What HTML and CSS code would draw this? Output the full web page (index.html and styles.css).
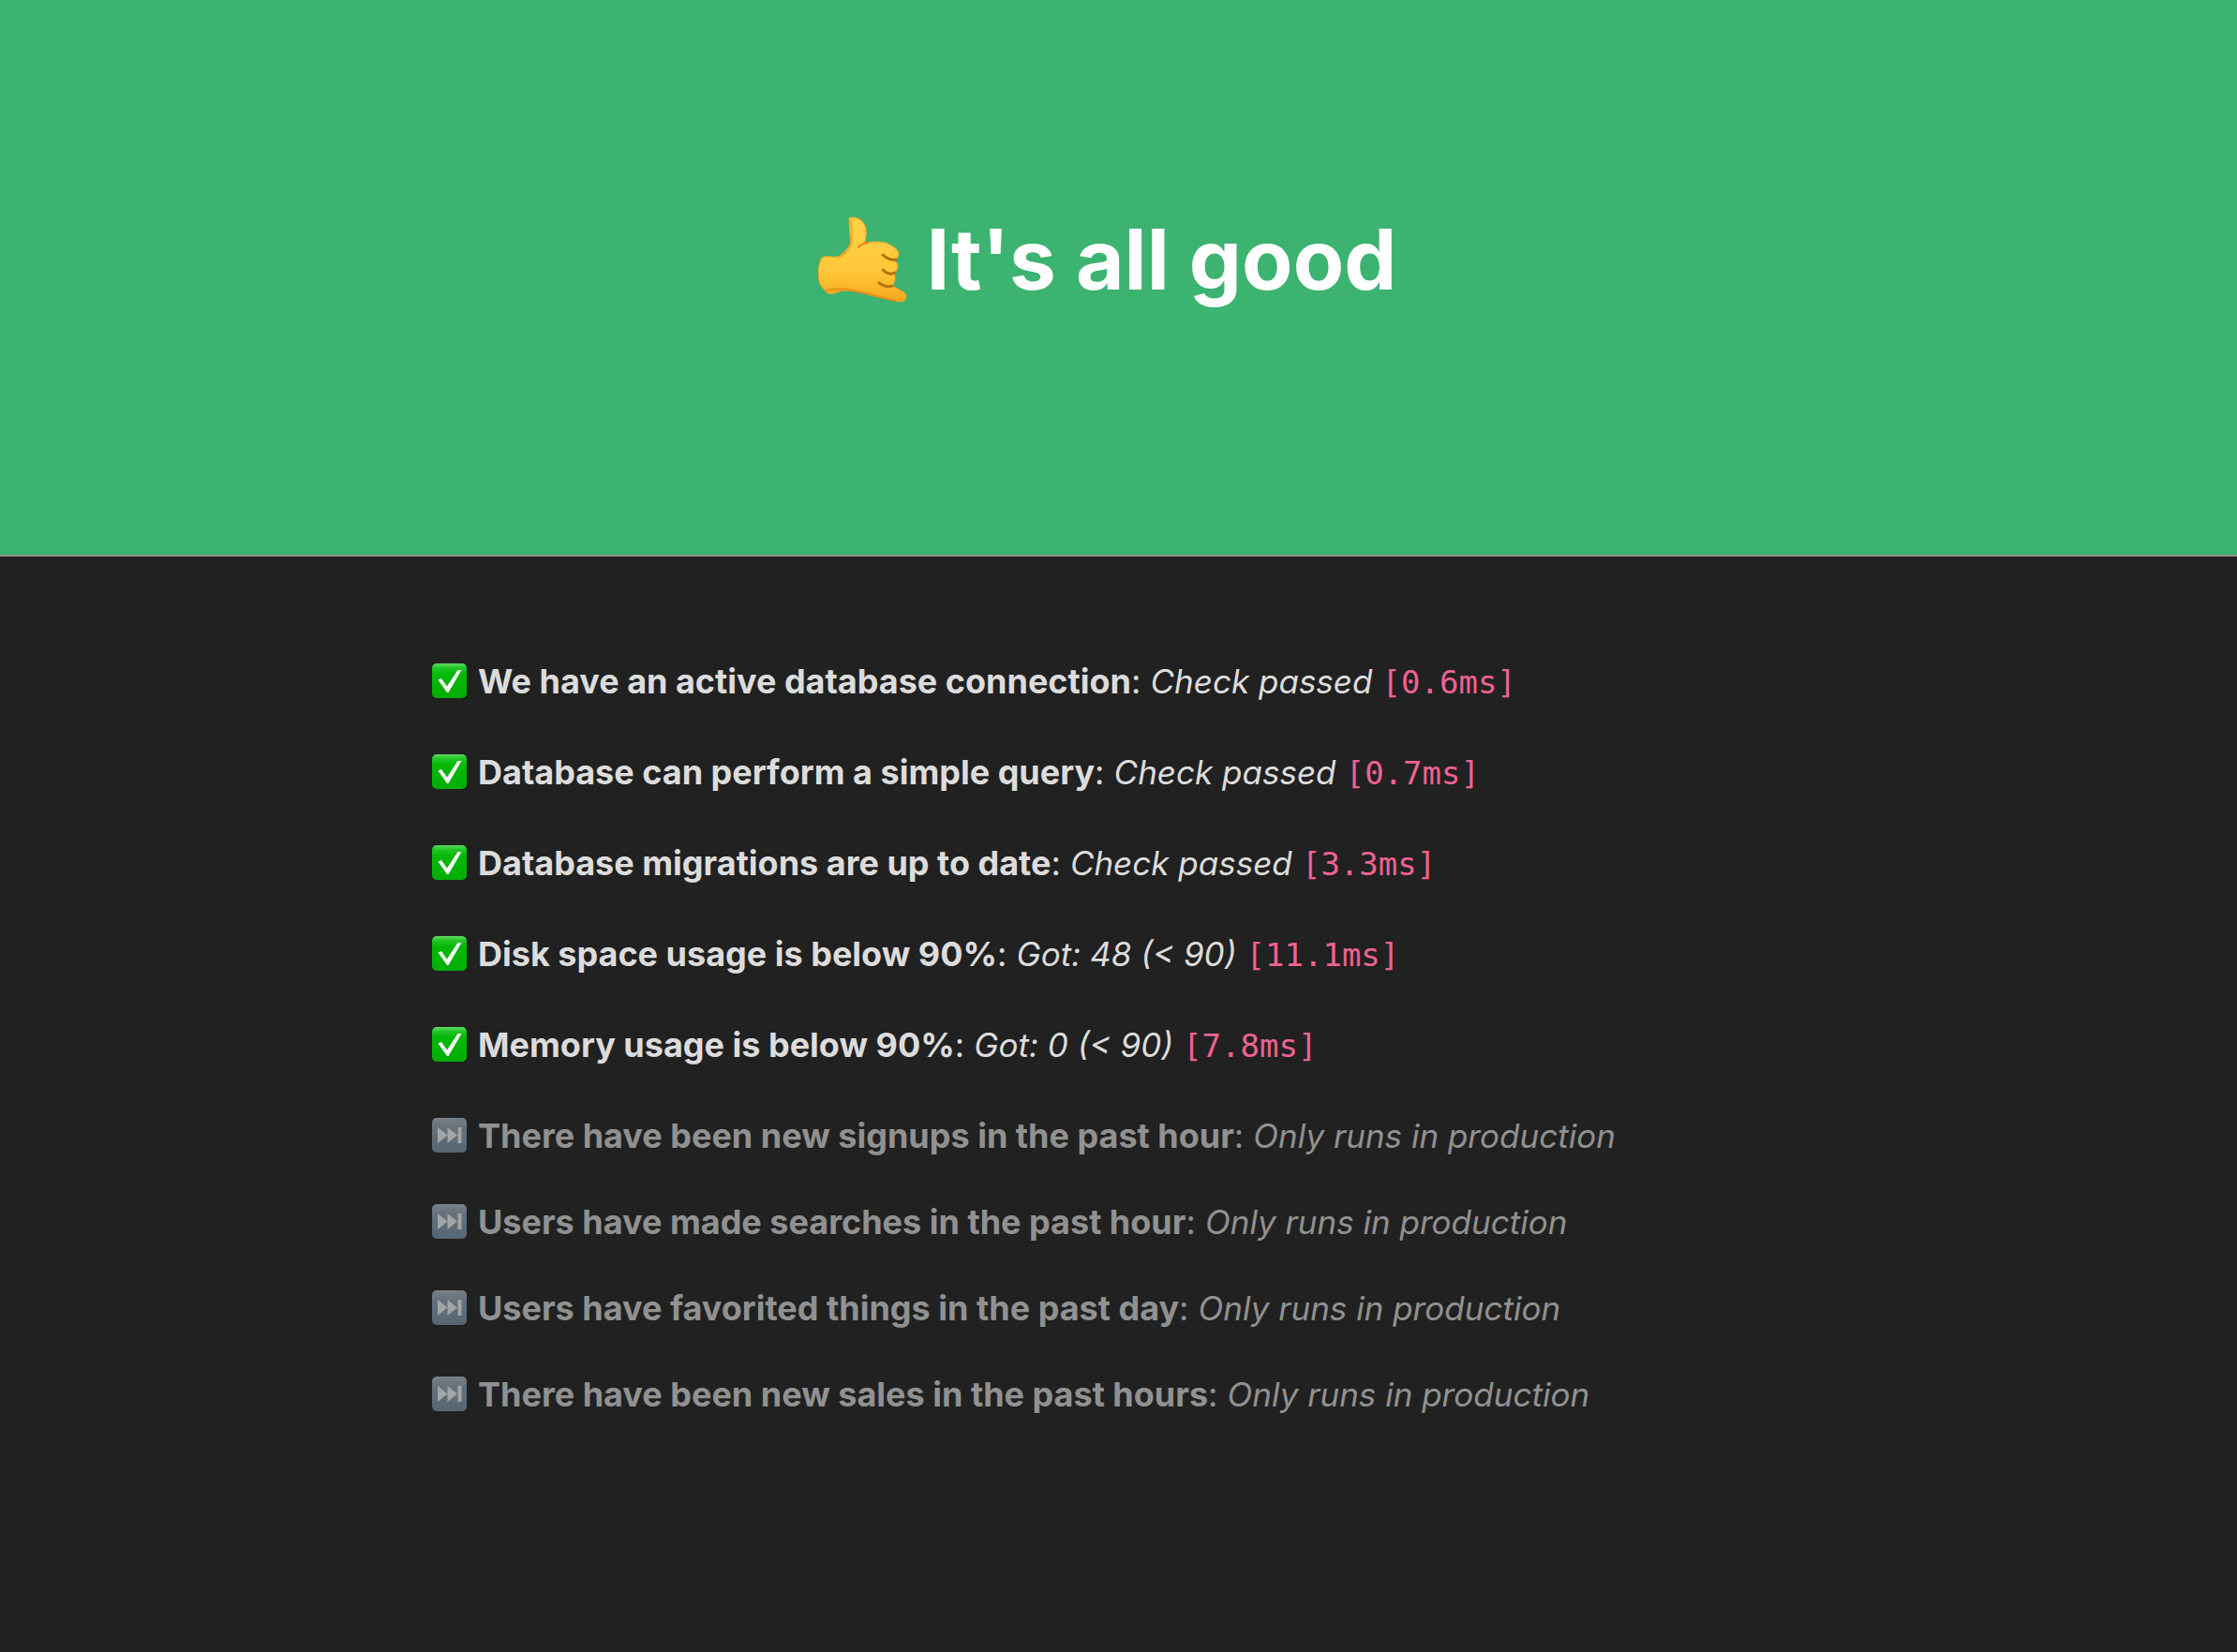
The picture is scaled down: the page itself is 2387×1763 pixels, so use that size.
FILE: index.html
```html
<!DOCTYPE html>
<html lang="en">
<head>
<meta charset="utf-8">
<meta name="viewport" content="width=device-width, initial-scale=1">
<title>It's all good</title>
<link rel="stylesheet" href="styles.css">
</head>
<body>
<svg class="defs" width="0" height="0" aria-hidden="true">
  <defs>
    <linearGradient id="green" x1="0" y1="0" x2="0" y2="1">
      <stop offset="0" stop-color="#5fdc62"/>
      <stop offset=".13" stop-color="#22c526"/>
      <stop offset=".3" stop-color="#04b908"/>
      <stop offset="1" stop-color="#02ad04"/>
    </linearGradient>
    <linearGradient id="slate" x1="0" y1="0" x2="0" y2="1">
      <stop offset="0" stop-color="#b4c1cd"/>
      <stop offset=".3" stop-color="#93a6b8"/>
      <stop offset="1" stop-color="#7c95ac"/>
    </linearGradient>
    <linearGradient id="skin" x1="0" y1="0" x2="0" y2="1">
      <stop offset="0" stop-color="#ffd047"/>
      <stop offset=".65" stop-color="#ffc738"/>
      <stop offset="1" stop-color="#f7a51e"/>
    </linearGradient>
    <symbol id="check" viewBox="0 0 37 37">
      <rect width="37" height="37" rx="5" fill="url(#green)"/>
      <path d="M6.500 17.500L10 16l6 8.500L27.500 7H31.500L17.500 31H16z" fill="#fff"/>
    </symbol>
    <symbol id="skip" viewBox="0 0 37 37">
      <rect width="37" height="37" rx="5" fill="url(#slate)"/>
      <path d="M6 10l10.500 8.500L6 27zM16.500 10L27 18.500 16.500 27zM27.500 10H31.500V27H27.500z" fill="#f8fcff"/>
    </symbol>
  </defs>
</svg>
<header class="banner">
  <h1 class="title">
    <svg class="hand" viewBox="0 0 96 92" role="img" aria-label="Call me hand">
      <path d="M33 1.500C42-1 50 5 51 14C51.500 20 51 25 49 29C57 26 66 27 72 28C79 31 86 35 86 40C85.500 45 82 46 81 47C85 49 86 53 84 57C83 59 82 60 81 61C83 65 82 70 79 74L90 80C95 83 95 88 91 90.500C87 92 79 89 72 88C54 84 41 79 27 79C21 79 17 85 9 81C8 78 4 77 2 72C-1 63 0 51 4 44C10 41 17 45 23 42C30 37 33 32 35 28C34 20 33 10 33 1.500Z" fill="url(#skin)" stroke="#f0a528" stroke-width="1"/>
      <path d="M34.500 3C36 16 37 25 34 31C31 38 26 43 20 44" fill="none" stroke="#ef9d1f" stroke-width="2" opacity=".7"/>
      <path d="M43 33C45 30 48 29 53 28" fill="none" stroke="#df841a" stroke-width="2" stroke-linecap="round"/>
      <path d="M69 41C73 45 79 47 83 46M69 57C73 61 78 62 82 60M65 71C69 74 75 76 79 74" fill="none" stroke="#b8700f" stroke-width="3" stroke-linecap="round"/>
      <path d="M8 79C18 77 27 77 37 79C52 82 69 87 83 90" fill="none" stroke="#e48719" stroke-width="2" opacity=".8"/>
    </svg>
    It's all good
  </h1>
</header>
<main class="content">
  <ul class="checks">
    <li class="check"><svg class="icon" role="img" aria-label="Passed"><use href="#check"/></svg><strong>We have an active database connection</strong>: <em>Check passed</em> <code>[0.6ms]</code></li>
    <li class="check"><svg class="icon" role="img" aria-label="Passed"><use href="#check"/></svg><strong>Database can perform a simple query</strong>: <em>Check passed</em> <code>[0.7ms]</code></li>
    <li class="check"><svg class="icon" role="img" aria-label="Passed"><use href="#check"/></svg><strong>Database migrations are up to date</strong>: <em>Check passed</em> <code>[3.3ms]</code></li>
    <li class="check"><svg class="icon" role="img" aria-label="Passed"><use href="#check"/></svg><strong>Disk space usage is below 90%</strong>: <em>Got: 48 (&lt; 90)</em> <code>[11.1ms]</code></li>
    <li class="check"><svg class="icon" role="img" aria-label="Passed"><use href="#check"/></svg><strong>Memory usage is below 90%</strong>: <em>Got: 0 (&lt; 90)</em> <code>[7.8ms]</code></li>
    <li class="check skipped"><svg class="icon" role="img" aria-label="Skipped"><use href="#skip"/></svg><strong>There have been new signups in the past hour</strong>: <em>Only runs in production</em></li>
    <li class="check skipped"><svg class="icon" role="img" aria-label="Skipped"><use href="#skip"/></svg><strong>Users have made searches in the past hour</strong>: <em>Only runs in production</em></li>
    <li class="check skipped"><svg class="icon" role="img" aria-label="Skipped"><use href="#skip"/></svg><strong>Users have favorited things in the past day</strong>: <em>Only runs in production</em></li>
    <li class="check skipped"><svg class="icon" role="img" aria-label="Skipped"><use href="#skip"/></svg><strong>There have been new sales in the past hours</strong>: <em>Only runs in production</em></li>
  </ul>
</main>
</body>
</html>
```
FILE: styles.css
```css
* {
  box-sizing: border-box;
}

body {
  margin: 0;
  background: #212121;
  color: #dcdcdc;
  font-family: Inter, "Liberation Sans", sans-serif;
  font-size: 36px;
}

.defs {
  position: absolute;
}

.banner {
  padding: 217px 24px 255px;
  background: #3cb371;
  border-bottom: 2px solid #8f9385;
}

.title {
  display: flex;
  align-items: center;
  justify-content: center;
  gap: 20px;
  margin: 0;
  padding-right: 24px;
  color: #fff;
  font-size: 89px;
  line-height: 120px;
  font-weight: 700;
}

.hand {
  width: 96px;
  height: 92px;
}

.content {
  max-width: 1513px;
  margin: 0 auto;
  padding: 106px 24px;
}

.checks {
  margin: 0;
  padding: 0;
  list-style: none;
}

.check {
  margin-bottom: 42px;
  line-height: 55px;
}

.skipped {
  margin-bottom: 37px;
  opacity: 0.6;
}

.icon {
  width: 37px;
  height: 37px;
  margin-right: 12px;
  vertical-align: -5px;
}

em {
  font-size: 35px;
  line-height: 1;
}

code {
  color: #f06292;
  font-family: "DejaVu Sans Mono", monospace;
  font-size: 34px;
  line-height: 1;
}
```
